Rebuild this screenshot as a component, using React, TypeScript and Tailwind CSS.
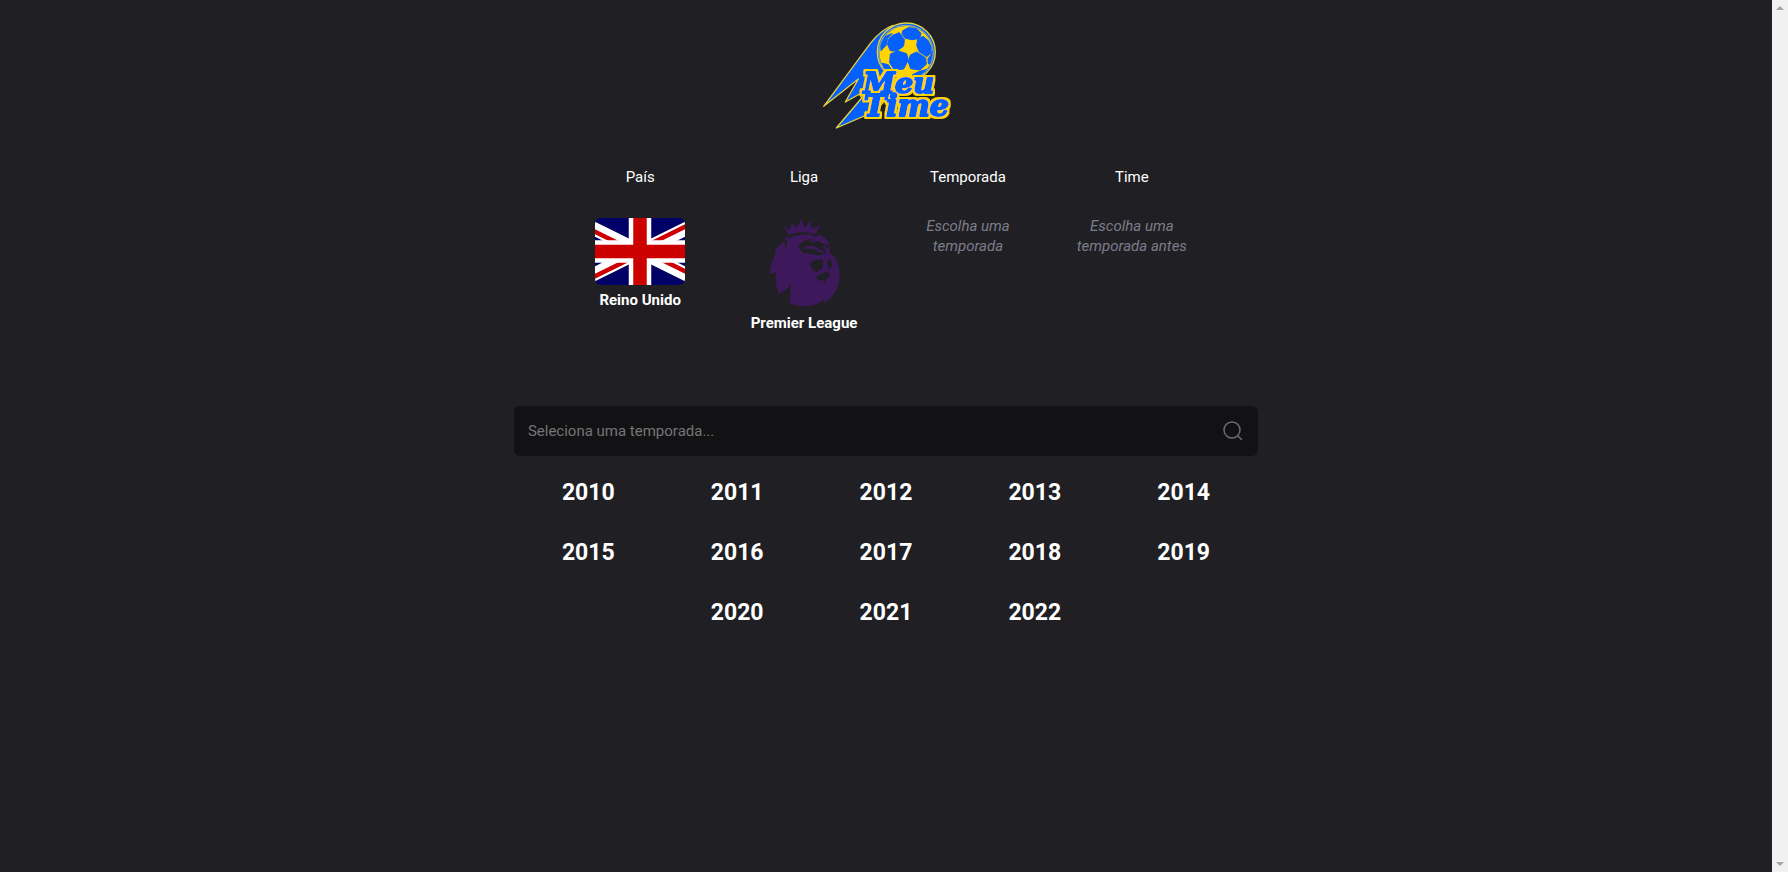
import React, { useState } from "react";

const seasons = [2010, 2011, 2012, 2013, 2014, 2015, 2016, 2017, 2018, 2019, 2020, 2021, 2022];

function Logo() {
  return (
    <svg viewBox="0 0 450 375" className="h-[125px] w-[150px]" role="img" aria-label="Meu Time">
      <defs>
        <filter id="lettering" x="-10%" y="-10%" width="120%" height="120%">
          <feMorphology in="SourceAlpha" operator="dilate" radius="6" result="outline" />
          <feFlood floodColor="#ffd400" />
          <feComposite in2="outline" operator="in" result="yellow" />
          <feMerge>
            <feMergeNode in="yellow" />
            <feMergeNode in="SourceGraphic" />
          </feMerge>
        </filter>
      </defs>
      <g fill="#0560fd" stroke="#e6cf3c" strokeWidth="4" strokeLinejoin="round">
        <path d="M246 46 C218 56 200 72 178 100 L38 289 L142 207 L103 276 L146 252 L152 264 L76 354 L190 305 L300 190 Z" />
        <circle cx="286" cy="126" r="87" />
      </g>
      <circle cx="285" cy="128" r="80" fill="#ffd400" />
      <g fill="#0560fd" stroke="#0560fd" strokeWidth="3" strokeLinejoin="round">
        <path d="M275 62 L292 53 L315 55 L330 70 L326 85 L304 89 L283 85 L273 72 Z" />
        <path d="M244 76 L265 68 L280 88 L278 108 L257 124 L238 122 L230 104 L232 88 Z" />
        <path d="M320 88 L336 79 L352 92 L361 112 L359 130 L347 140 L325 126 L317 106 Z" />
        <path d="M238 132 L262 123 L287 131 L292 150 L278 177 L250 180 L236 158 Z" />
        <path d="M298 135 L317 126 L344 144 L346 163 L327 180 L299 176 L292 156 Z" />
        <path d="M222 80 L243 70 L229 86 L227 104 L210 122 L209 103 Z" />
        <path d="M213 160 L232 164 L244 184 L225 188 Z" />
        <path d="M304 194 L326 184 L348 178 L332 196 L311 202 Z" />
        <path d="M360 134 L364 120 L364 137 L358 160 L352 162 L351 146 Z" />
      </g>
      <circle cx="285" cy="128" r="82" fill="none" stroke="#9db48c" strokeWidth="3" />
      <g
        fontFamily="'DejaVu Serif', serif"
        fontWeight="700"
        fontStyle="italic"
        fill="#0560fd"
        stroke="#0560fd"
        strokeWidth="6"
        strokeLinejoin="round"
        filter="url(#lettering)"
      >
        <text x="157" y="248" fontSize="86">Meu</text>
        <text x="158" y="319" fontSize="91">Time</text>
      </g>
    </svg>
  );
}

function UkFlag() {
  return (
    <svg viewBox="10 0 40 30" preserveAspectRatio="none" className="h-[67px] w-[90px] rounded-md" role="img" aria-label="Bandeira do Reino Unido">
      <clipPath id="saltire">
        <path d="M30 15 h30 v15 Z v15 h-30 Z h-30 v-15 Z v-15 h30 Z" />
      </clipPath>
      <rect width="60" height="30" fill="#006" />
      <path d="M0 0 L60 30 M60 0 L0 30" stroke="#fff" strokeWidth="6" />
      <path d="M0 0 L60 30 M60 0 L0 30" stroke="#c00" strokeWidth="4" clipPath="url(#saltire)" />
      <path d="M30 0 V30 M0 15 H60" stroke="#fff" strokeWidth="10" />
      <path d="M30 0 V30 M0 15 H60" stroke="#c00" strokeWidth="6" />
    </svg>
  );
}

function PremierLeagueCrest() {
  return (
    <svg viewBox="12 21 270 270" className="size-[90px]" role="img" aria-label="Escudo da Premier League">
      <g fill="#3d195b">
        <path d="M99 71 L87 45 L105 58 L109 37 L124 51 L139 24 L149 50 L167 30 L170 54 L194 43 L183 69 Q141 57 99 71 Z" />
        <path d="M91 78 L101 76 L99 83 Q130 67 169 70 L176 77 L196 73 Q213 80 222 98 Q226 111 224 127 Q240 134 246 154 Q257 179 253 205 Q250 236 235 249 Q225 268 206 275 L209 265 Q183 286 150 286 Q121 286 105 276 L107 215 Q96 240 71 249 Q59 218 63 183 L54 188 L43 186 Q50 149 61 130 L60 121 Q69 105 89 91 Z" />
      </g>
      <g fill="#202024">
        <path d="M88 92 Q88 105 95 113 Q92 99 99 84 Z" />
        <path d="M130 103 Q147 84 177 85 Q167 91 162 91 L185 98 Q211 106 215 127 Q202 134 184 132 Q166 126 145 127 Q133 116 130 103 Z" />
        <path d="M174 92 L191 90 L218 106 L211 94 L221 104 L223 116 L211 107 L192 104 Z" />
        <path d="M165 160 L171 150 L199 144 L205 149 L203 171 L184 184 L173 178 Z" />
        <path d="M216 151 L224 145 Q234 154 230 166 L222 176 Z" />
        <path d="M183 195 L196 191 L209 184 L220 181 L223 195 L212 207 L209 218 L204 206 L191 209 Z" />
      </g>
      <path d="M145 110 L160 104 L176 106 L190 112 L204 120 L211 129 Q195 127 180 115 Q161 110 145 114 Z" fill="#3d195b" />
      <path d="M204 132 L222 128 L218 142 Z" fill="#3d195b" />
    </svg>
  );
}

function SearchIcon() {
  return (
    <svg viewBox="0 0 20 20" className="size-5" fill="none" stroke="#6c6c73" strokeWidth="1.5" strokeLinecap="round" aria-hidden="true">
      <circle cx="9" cy="9" r="8" />
      <path d="M14.8 14.8 L18.5 18.5" />
    </svg>
  );
}

function Step({ title, children }: { title: string; children: React.ReactNode }) {
  return (
    <section className="flex flex-col items-center text-center">
      <h2 className="leading-5">{title}</h2>
      <div className="mt-[29px] flex flex-col items-center">{children}</div>
    </section>
  );
}

function Hint({ children }: { children: React.ReactNode }) {
  return <p className="max-w-[116px] leading-5 text-[#7c7c8a] italic">{children}</p>;
}

export default function App() {
  const [query, setQuery] = useState("");
  const visible = seasons.filter((season) => String(season).includes(query));

  return (
    <div className="flex min-h-screen bg-[#202024] font-[Roboto,sans-serif] text-[15px] text-white">
      <main className="flex flex-1 flex-col items-center pt-[10px]">
        <h1>
          <Logo />
        </h1>

        <div className="mt-8 grid min-h-[219px] w-[37%] min-w-[600px] grid-cols-4">
          <Step title="País">
            <div className="pt-[2px]">
              <UkFlag />
            </div>
            <strong className="mt-[5px] leading-5">Reino Unido</strong>
          </Step>
          <Step title="Liga">
            <div className="pt-[2px]">
              <PremierLeagueCrest />
            </div>
            <strong className="mt-[5px] leading-5">Premier League</strong>
          </Step>
          <Step title="Temporada">
            <Hint>Escolha uma temporada</Hint>
          </Step>
          <Step title="Time">
            <Hint>Escolha uma temporada antes</Hint>
          </Step>
        </div>

        <div className="mt-5 w-[42%] min-w-[620px]">
          <form
            className="flex h-[50px] items-center rounded-md bg-[#121214] pr-[15px] pl-[14px]"
            onSubmit={(event) => event.preventDefault()}
          >
            <input
              type="text"
              aria-label="Seleciona uma temporada"
              placeholder="Seleciona uma temporada..."
              value={query}
              onChange={(event) => setQuery(event.target.value)}
              className="min-w-0 flex-1 bg-transparent outline-none placeholder:text-[#757575]"
            />
            <button type="submit" aria-label="Buscar">
              <SearchIcon />
            </button>
          </form>
          <ul className="mt-[7px] flex flex-wrap justify-center">
            {visible.map((season) => (
              <li key={season} className="w-1/5">
                <button type="button" className="h-[60px] w-full text-[23px] font-bold">
                  {season}
                </button>
              </li>
            ))}
          </ul>
        </div>
      </main>

      <div className="flex w-4 flex-col items-center justify-between bg-[#f1f1f1] py-[6px]" aria-hidden="true">
        <svg viewBox="0 0 8 4" className="h-1 w-2" fill="#a3a3a3">
          <path d="M4 0 L8 4 H0 Z" />
        </svg>
        <svg viewBox="0 0 8 4" className="h-1 w-2" fill="#a3a3a3">
          <path d="M0 0 H8 L4 4 Z" />
        </svg>
      </div>
    </div>
  );
}
